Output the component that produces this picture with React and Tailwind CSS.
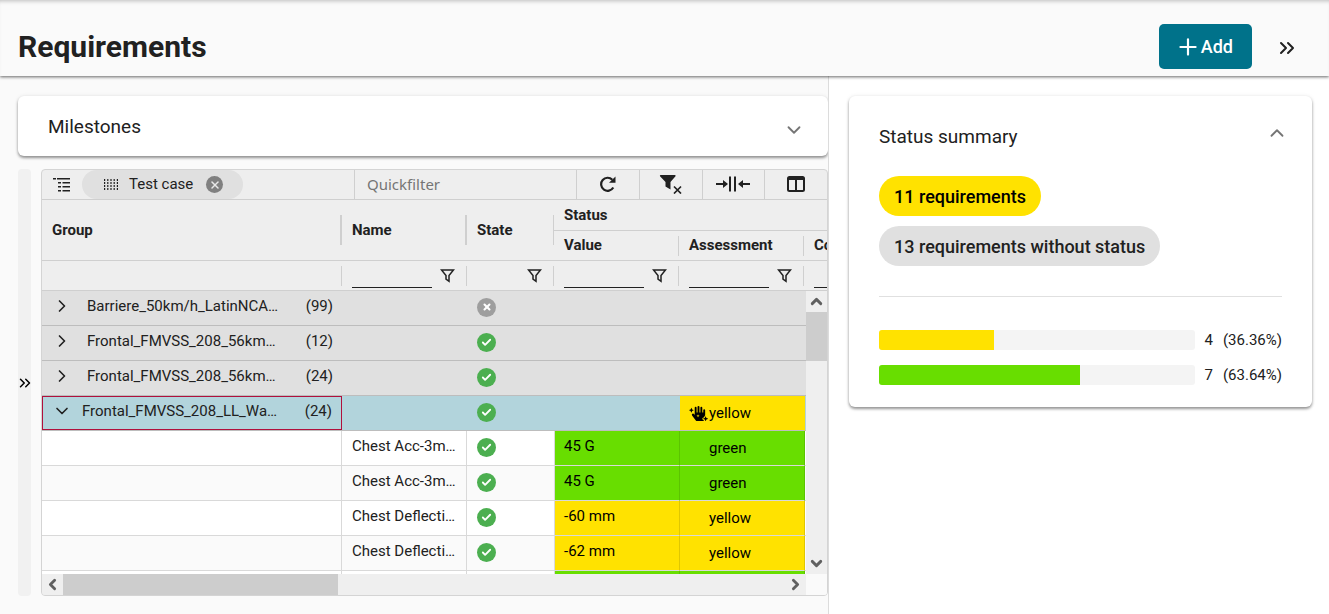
import { useState } from "react";
import { ChevronDown, ChevronUp, ChevronRight, ChevronsRight, Check, Plus, X } from "lucide-react";
import { FaHandSparkles } from "react-icons/fa";

const groups = [
  { label: "Barriere_50km/h_LatinNCA…", count: 99, ok: false },
  { label: "Frontal_FMVSS_208_56km…", count: 12, ok: true },
  { label: "Frontal_FMVSS_208_56km…", count: 24, ok: true },
  { label: "Frontal_FMVSS_208_LL_Wa…", count: 24, ok: true, open: true, assessment: "yellow" },
];

const rows = [
  { name: "Chest Acc-3m…", value: "45 G", assessment: "green" },
  { name: "Chest Acc-3m…", value: "45 G", assessment: "green" },
  { name: "Chest Deflecti…", value: "-60 mm", assessment: "yellow" },
  { name: "Chest Deflecti…", value: "-62 mm", assessment: "yellow" },
];

const summary = [
  { count: 4, percent: 36.36, color: "bg-[#ffe200]" },
  { count: 7, percent: 63.64, color: "bg-[#68de00]" },
];

const cellColors = {
  yellow: "bg-[#ffe200]",
  green: "bg-[#68de00]",
};

const cellBorders = {
  yellow: "border-l-[#e0c700]",
  green: "border-l-[#5bc400]",
};

const cardShadow = "shadow-[0_2px_3px_rgba(0,0,0,0.4),0_0_4px_rgba(0,0,0,0.08)]";

const Columns = () => (
  <colgroup>
    <col className="w-[300px]" />
    <col className="w-[125px]" />
    <col className="w-[87px]" />
    <col className="w-[125px]" />
    <col className="w-[125px]" />
    <col className="w-[125px]" />
  </colgroup>
)

const StateIcon = ({ ok }) => (
  <span className={"flex size-[19px] items-center justify-center rounded-full text-white " + (ok ? "bg-[#4caf50]" : "bg-[#9e9e9e]")}>
    {ok ? <Check size={11} strokeWidth={4} /> : <X size={10} strokeWidth={5} />}
  </span>
)

const TreeIcon = () => (
  <svg width="18" height="14" viewBox="0 0 18 14" fill="currentColor" aria-hidden="true">
    <path d="M0 0h3v1.5H0zM4 0h13v1.5H4zM5 4h3v1.5H5zM9.500 4H17v1.5H9.500zM5 8h3v1.500H5zM9.500 8H17v1.500H9.500zM5 12h3v1.500H5zM9.500 12H17v1.500H9.500z" />
  </svg>
)

const GripIcon = () => (
  <svg width="14" height="11" viewBox="0 0 14 11" fill="none" stroke="currentColor" strokeWidth="1.2" strokeDasharray="2 1" aria-hidden="true">
    <path d="M.6 0v11M3.800 0v11M7 0v11M10.200 0v11M13.400 0v11" />
  </svg>
)

const FunnelIcon = () => (
  <svg width="15" height="14" viewBox="0 0 15 14" fill="none" stroke="currentColor" strokeWidth="1.5" aria-hidden="true">
    <path d="M1.500 1h12L9 6.600V12.300L6 10.200V6.600z" />
  </svg>
)

const RefreshIcon = () => (
  <svg width="18" height="16" viewBox="0 0 18 16" aria-hidden="true">
    <path fill="none" stroke="currentColor" strokeWidth="2.2" d="M13.300 3.700A6.500 6.500 0 1 0 14.300 11.500" />
    <path fill="currentColor" d="M16.500.500v6.300H10z" />
  </svg>
)

const ClearFilterIcon = () => (
  <svg width="24" height="20" viewBox="0 0 24 20" aria-hidden="true">
    <path fill="currentColor" d="M1.500 1h14.500q1 .300.500 1.200L11.500 8v7.500L6.500 12.500V8L1 2.200Q.500 1.300 1.500 1z" />
    <path fill="none" stroke="currentColor" strokeWidth="1.700" d="m15 12.500 7 7M22 12.500l-7 7" />
  </svg>
)

const FitColumnsIcon = () => (
  <svg width="34" height="16" viewBox="0 0 34 16" fill="currentColor" aria-hidden="true">
    <path d="M0 7h7V4l5 4-5 4V9H0zM34 7h-7V4l-5 4 5 4V9h7zM13 0.500h2v15h-2zM18 0.500h2v15h-2z" />
  </svg>
)

const ColumnsIcon = () => (
  <svg width="18" height="16" viewBox="0 0 18 16" fill="none" stroke="currentColor" strokeWidth="2" aria-hidden="true">
    <rect x="1" y="1" width="16" height="14" rx="1.500" />
    <path d="M1 3h16M9 3v12" />
  </svg>
)

const tools = [
  { label: "Refresh", icon: <RefreshIcon /> },
  { label: "Clear filters", icon: <ClearFilterIcon /> },
  { label: "Fit columns", icon: <FitColumnsIcon /> },
  { label: "Choose columns", icon: <ColumnsIcon /> },
];

const Separator = ({ className }) => (
  <span className={"absolute top-1/2 right-0 -translate-y-1/2 bg-[#cfcfcf] " + className} />
)

const FilterCell = ({ label, input = true, last }) => (
  <td className="relative h-[30px] border-b border-[#cfcfcf] p-0 pl-[10px]">
    <div className="flex h-[28px] items-center justify-end pr-3">
      {input && <input aria-label={label + " filter"} className="mr-auto h-6 w-20 border-b border-[#212121] bg-transparent outline-none" />}
      {!last && <button aria-label={"Filter by " + label}><FunnelIcon /></button>}
    </div>
    {!last && <Separator className="h-5 w-px" />}
  </td>
)

const GridHeader = () => (
  <div className="overflow-hidden">
    <table className="w-[887px] table-fixed border-separate border-spacing-0 text-left text-[15px] leading-5" aria-label="Column headers">
      <Columns />
      <thead>
        <tr>
          <th rowSpan={2} className="relative border-b border-[#cfcfcf] px-[10px] py-0">Group<Separator className="h-[30px] w-0.5" /></th>
          <th rowSpan={2} className="relative border-b border-[#cfcfcf] px-[10px] py-0">Name<Separator className="h-[30px] w-0.5" /></th>
          <th rowSpan={2} className="relative border-b border-[#cfcfcf] px-[10px] py-0">State<Separator className="h-[30px] w-px" /></th>
          <th colSpan={3} className="h-[31px] border-b border-[#cfcfcf] px-[10px] py-0">Status</th>
        </tr>
        <tr>
          <th className="relative h-[30px] border-b border-[#cfcfcf] px-[10px] pt-0 pb-0.5">Value<Separator className="h-5 w-px" /></th>
          <th className="relative h-[30px] border-b border-[#cfcfcf] px-[10px] pt-0 pb-0.5">Assessment<Separator className="h-5 w-px" /></th>
          <th className="h-[30px] border-b border-[#cfcfcf] px-[10px] pt-0 pb-0.5">Comment</th>
        </tr>
        <tr>
          <td className="relative h-[30px] border-b border-[#cfcfcf] p-0"><Separator className="h-5 w-px" /></td>
          <FilterCell label="Name" />
          <FilterCell label="State" input={false} />
          <FilterCell label="Value" />
          <FilterCell label="Assessment" />
          <FilterCell label="Comment" last />
        </tr>
      </thead>
    </table>
  </div>
)

const GroupRow = ({ group }) => {
  let { label, count, ok, open, assessment } = group;
  let cell = "border-b border-[#bdbdbd] p-0";

  return (
    <tr className={"h-[35px] " + (open ? "bg-[#b2d4dc]" : "bg-[#e0e0e0]")}>
      <td className={cell}>
        <div className={"flex h-[34px] items-start px-[9px] " + (open ? "border border-[#b0103c] leading-[28px]" : "pl-[10px] leading-[30px]")}>
          <button className={"flex w-5 shrink-0 items-center justify-center " + (open ? "h-[28px]" : "h-[30px]")} aria-label={open ? "Collapse" : "Expand"}>
            {open ? <ChevronDown size={20} strokeWidth={2} /> : <ChevronRight size={20} strokeWidth={2} />}
          </button>
          <span className={"flex-1 truncate " + (open ? "pl-[10px]" : "pl-[15px]")}>{label}</span>
          <span>({count})</span>
        </div>
      </td>
      <td className={cell}></td>
      <td className="border-b border-[#bdbdbd] p-0 pb-0.5 pl-[10px]"><StateIcon ok={ok} /></td>
      <td className={cell}></td>
      {assessment ?
        <td className="border-b border-l border-b-[#bdbdbd] border-l-[#b2d4dc] bg-[#ffe200] p-0 pl-[9px] text-black">
          <span className="flex items-center gap-px"><FaHandSparkles size={19} />{assessment}</span>
        </td>
        :
        <td className={cell}></td>
      }
      <td className={assessment ? "border-b border-l border-b-[#bdbdbd] border-l-[#ffe200] p-0" : cell}></td>
    </tr>
  )
}

const LeafRow = ({ row, striped }) => (
  <tr className={"h-[35px] leading-[30px] " + (striped ? "bg-[#fafafa]" : "bg-white")}>
    <td className="border-r border-b border-[#d9d9d9] p-0"></td>
    <td className="border-r border-b border-[#d9d9d9] p-0 pl-[10px] align-top">{row.name}</td>
    <td className="border-b border-[#d9d9d9] p-0 pb-0.5 pl-[10px]">{row.name && <StateIcon ok />}</td>
    <td className={"border-b border-l border-[#d9d9d9] p-0 pl-[9px] align-top text-black " + cellColors[row.assessment]}>{row.value}</td>
    <td className={"border-b border-l border-b-[#d9d9d9] p-0 pl-[29px] text-black " + cellColors[row.assessment] + " " + cellBorders[row.assessment]}>
      {row.name && row.assessment}
    </td>
    <td className={"border-b border-l border-b-[#d9d9d9] p-0 " + cellBorders[row.assessment]}></td>
  </tr>
)

const ScrollArrow = ({ label, children }) => (
  <button aria-label={label} className="flex size-[21px] shrink-0 items-center justify-center text-[#606060]">{children}</button>
)

const GridBody = () => (
  <div className="flex min-h-0 flex-1">
    <div className="min-w-0 flex-1 overflow-hidden">
      <table className="w-[887px] table-fixed border-separate border-spacing-0 text-[15px]" aria-label="Requirements">
        <Columns />
        <tbody>
          {groups.map((group, i) => <GroupRow key={i} group={group} />)}
          {rows.map((row, i) => <LeafRow key={i} row={row} striped={i % 2 == 1} />)}
          <LeafRow row={{ assessment: "green" }} />
        </tbody>
      </table>
    </div>
    <div className="flex w-[21px] flex-col bg-[#efefef]">
      <ScrollArrow label="Scroll up"><ChevronUp size={17} strokeWidth={4} /></ScrollArrow>
      <div className="h-[49px] bg-[#cdcdcd]" />
      <div className="flex-1" />
      <ScrollArrow label="Scroll down"><ChevronDown size={17} strokeWidth={4} /></ScrollArrow>
    </div>
  </div>
)

const Grid = () => (
  <div className="flex min-w-0 flex-1 flex-col overflow-hidden rounded-sm border border-[#d4d4d4] bg-[#eeeeee]">
    <div className="flex h-[30px] border-b border-[#cfcfcf]">
      <div className="flex w-[313px] items-center border-r border-[#cfcfcf] pl-[11px]">
        <button aria-label="Row groups"><TreeIcon /></button>
        <span className="ml-[11px] flex h-[29px] items-center rounded-full bg-[#e0e0e0] pr-5 pl-[22px] text-[15px]">
          <GripIcon />
          <span className="pr-[13px] pl-[11px]">Test case</span>
          <button aria-label="Remove Test case" className="flex size-[17px] items-center justify-center rounded-full bg-[#808080] text-[#e8e8e8]">
            <X size={12} strokeWidth={3} />
          </button>
        </span>
      </div>
      <input
        type="text"
        aria-label="Quickfilter"
        placeholder="Quickfilter"
        className="min-w-0 flex-1 border-r border-[#cfcfcf] px-3 font-['Noto_Sans',sans-serif] text-[15px] outline-none placeholder:text-[#757575]"
      />
      <div className="flex w-[250px]">
        {tools.map(({ label, icon }) => (
          <button key={label} aria-label={label} className="flex flex-1 items-center justify-center border-r border-[#cfcfcf] pb-px last:border-r-0">{icon}</button>
        ))}
      </div>
    </div>
    <GridHeader />
    <GridBody />
    <div className="flex h-[21px] bg-[#efefef]">
      <ScrollArrow label="Scroll left"><ChevronRight className="rotate-180" size={17} strokeWidth={4} /></ScrollArrow>
      <div className="w-[275px] bg-[#cdcdcd]" />
      <div className="flex-1" />
      <ScrollArrow label="Scroll right"><ChevronRight size={17} strokeWidth={4} /></ScrollArrow>
      <div className="w-[21px] bg-[#fafafa]" />
    </div>
  </div>
)

const StatusSummary = () => {
  const [open, setOpen] = useState(true);

  return (
    <section className={"rounded-md bg-white px-[30px] pt-[26px] pb-[22px] " + cardShadow}>
      <button className="flex w-full items-center justify-between text-left" aria-expanded={open} onClick={() => setOpen(!open)}>
        <h2 className="text-[19px] leading-[30px]">Status summary</h2>
        <ChevronUp size={22} strokeWidth={2} className="mb-2 -mr-1.5 text-[#757575]" />
      </button>
      {open && <>
        <div className="mt-6 flex flex-col items-start gap-[10px] border-b border-[#e0e0e0] pb-[30px] text-[18px] font-medium">
          <span className="flex h-10 items-center rounded-full bg-[#ffe200] px-[15px] text-black">11 requirements</span>
          <span className="flex h-10 items-center rounded-full bg-[#e0e0e0] px-[15px]">13 requirements without status</span>
        </div>
        <ul className="mt-[33px] flex flex-col gap-[15px] text-[15px] leading-5">
          {summary.map(({ count, percent, color }) => (
            <li key={count} className="flex items-center">
              <div className="h-5 flex-1 overflow-hidden rounded-[3px] bg-[#f4f4f4]">
                <div className={"h-full " + color} style={{ width: percent + "%" }} />
              </div>
              <span className="pl-[10px]">{count}</span>
              <span className="pl-[10px]">({percent}%)</span>
            </li>
          ))}
        </ul>
      </>}
    </section>
  )
}

const App = () => {
  return (
    <div className="flex h-screen min-h-[500px] flex-col bg-[#fafafa] font-[Roboto,sans-serif] text-[#212121]">
      <header className="relative z-10 flex h-[76px] shrink-0 items-center bg-[#fafafa] pt-[17px] pr-[30px] pl-[18px] shadow-[0_1px_3px_rgba(0,0,0,0.6),inset_0_4px_4px_-3px_rgba(0,0,0,0.25)]">
        <h1 className="flex-1 text-[30px] leading-10 font-bold">Requirements</h1>
        <button className="flex h-[45px] items-center rounded-[5px] bg-[#00728a] pr-[19px] pl-4 text-[18px] font-medium text-white">
          <Plus size={26} strokeWidth={2} />Add
        </button>
        <button aria-label="Collapse panel" className="mt-0.5 ml-[23px]">
          <ChevronsRight size={24} strokeWidth={2} />
        </button>
      </header>
      <div className="flex min-h-0 flex-1">
        <main className="flex min-w-0 flex-1 flex-col pt-5 pb-[18px] pl-[18px]">
          <button className={"flex h-[60px] shrink-0 items-center justify-between rounded-md bg-white pt-0.5 pr-[23px] pl-[30px] text-[19px] " + cardShadow}>
            Milestones
            <ChevronDown size={22} strokeWidth={2} className="mt-1.5 text-[#757575]" />
          </button>
          <div className="mt-[13px] flex min-h-0 flex-1 gap-[10px]">
            <button aria-label="Expand sidebar" className="flex w-[13px] items-center justify-center rounded-sm bg-[#f1f1f1] text-black">
              <ChevronsRight size={18} strokeWidth={2} className="shrink-0" />
            </button>
            <Grid />
          </div>
        </main>
        <aside className="w-[501px] shrink-0 border-l border-[#dcdcdc] bg-white pt-5 pr-[17px] pl-5">
          <StatusSummary />
        </aside>
      </div>
    </div>
  )
}

export default App
